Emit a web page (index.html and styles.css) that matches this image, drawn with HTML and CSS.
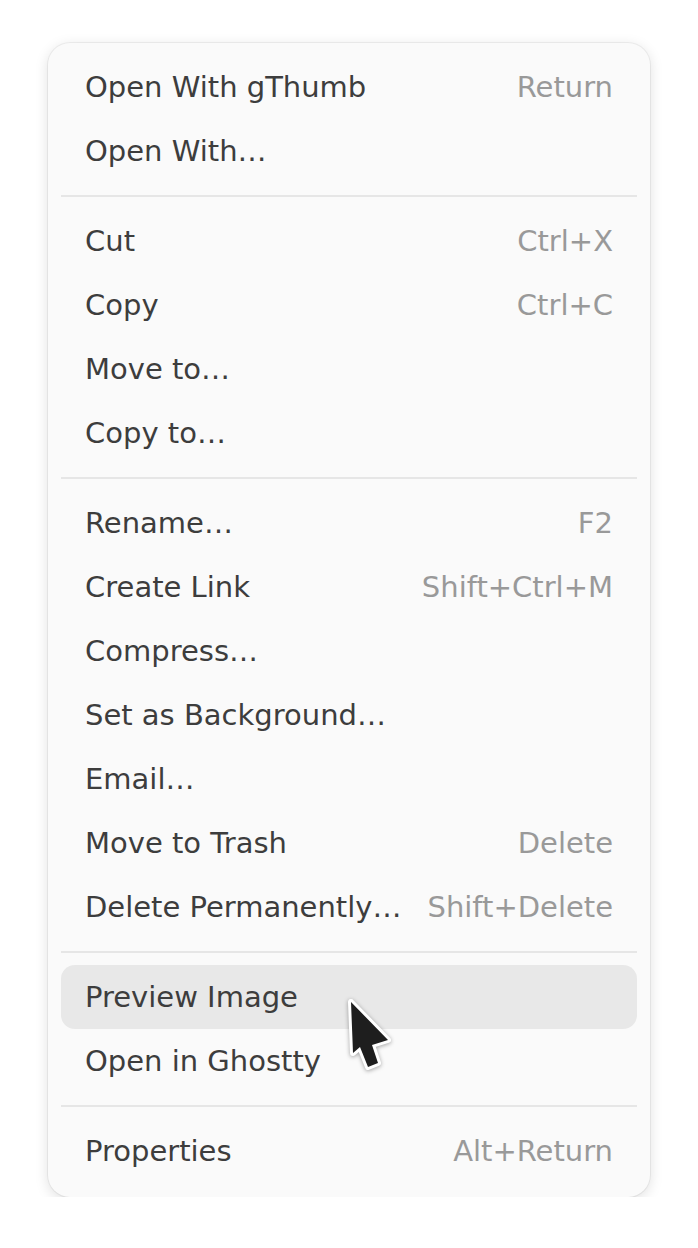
FILE: index.html
```html
<!DOCTYPE html>
<html lang="en">
<head>
<meta charset="utf-8">
<title>Context menu</title>
<link rel="stylesheet" href="styles.css">
</head>
<body>
<div class="menu">
  <div class="item"><span class="label">Open With gThumb</span><span class="accel">Return</span></div>
  <div class="item"><span class="label">Open With…</span></div>
  <div class="sep"></div>
  <div class="item"><span class="label">Cut</span><span class="accel">Ctrl+X</span></div>
  <div class="item"><span class="label">Copy</span><span class="accel">Ctrl+C</span></div>
  <div class="item"><span class="label">Move to…</span></div>
  <div class="item"><span class="label">Copy to…</span></div>
  <div class="sep"></div>
  <div class="item"><span class="label">Rename…</span><span class="accel">F2</span></div>
  <div class="item"><span class="label">Create Link</span><span class="accel">Shift+Ctrl+M</span></div>
  <div class="item"><span class="label">Compress…</span></div>
  <div class="item"><span class="label">Set as Background…</span></div>
  <div class="item"><span class="label">Email…</span></div>
  <div class="item"><span class="label">Move to Trash</span><span class="accel">Delete</span></div>
  <div class="item"><span class="label">Delete Permanently…</span><span class="accel">Shift+Delete</span></div>
  <div class="sep"></div>
  <div class="item hover"><span class="label">Preview Image</span>
    <svg class="cursor" width="50" height="80" viewBox="0 0 50 80" aria-hidden="true">
      <path d="M6 6 L8 57 L15 51 L23 71 L33 67 L27 49 L43 44 Z" fill="#1e1e1e" stroke="#ffffff" stroke-width="6" stroke-linejoin="round" paint-order="stroke"/>
    </svg>
  </div>
  <div class="item"><span class="label">Open in Ghostty</span></div>
  <div class="sep"></div>
  <div class="item"><span class="label">Properties</span><span class="accel">Alt+Return</span></div>
</div>
</body>
</html>
```

FILE: styles.css
```css
html, body {
  margin: 0;
  padding: 0;
  background: #ffffff;
}

body {
  font-family: "DejaVu Sans", "Noto Sans", sans-serif;
  font-size: 29px;
  color: #3d3d3d;
}

.menu {
  margin: 43px 0 0 48px;
  width: 602px;
  box-sizing: border-box;
  padding: 12px 0 14px;
  background: #fafafa;
  border-radius: 22px;
  box-shadow: 0 0 0 1px rgba(0, 0, 0, 0.05), 0 3px 14px rgba(0, 0, 0, 0.13);
  display: flex;
  flex-direction: column;
}

.item {
  position: relative;
  height: 64px;
  margin: 0 13px;
  padding: 0 24px;
  border-radius: 14px;
  display: flex;
  align-items: center;
  justify-content: space-between;
}

.item.hover {
  background: #e8e8e8;
}

.accel {
  color: #999999;
}

.sep {
  height: 2px;
  margin: 12px 13px;
  background: #e6e6e6;
}

.cursor {
  position: absolute;
  left: 284px;
  top: 31px;
  filter: drop-shadow(0 1px 2px rgba(0, 0, 0, 0.35));
}
```
